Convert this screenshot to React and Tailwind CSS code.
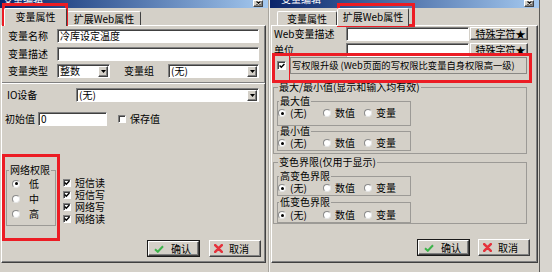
import React from 'react';

const RAISED = 'border border-t-white border-l-white border-r-[#404040] border-b-[#404040] shadow-[inset_-1px_-1px_0_#808080]';
const SUNKEN = 'border border-t-[#808080] border-l-[#808080] border-r-white border-b-white shadow-[inset_1px_1px_0_#404040]';

function TitleBar({ title, pad, closeGap }) {
  return (
    <div className="h-[8px] flex items-start justify-between bg-linear-to-r from-[#0a246a] to-[#a6caf0] overflow-hidden">
      <span className={`${pad} -mt-[6px] text-[10px] leading-[10px] text-white`}>{title}</span>
      <div className={`${closeGap} w-[10px] h-[7px] bg-[#d4d0c8] ${RAISED} flex items-end justify-center pb-[1px]`}>
        <svg width="5" height="4" viewBox="0 0 5 4">
          <path d="M0.5 0.5L4.5 3.5M4.5 0.5L0.5 3.5" stroke="#000" strokeWidth="1.1" />
        </svg>
      </div>
    </div>
  );
}

function Tab({ active, className = '', children }) {
  if (active) {
    return (
      <div className={`relative z-10 h-[18px] -mb-[1px] bg-[#d4d0c8] border-t border-l border-r border-t-white border-l-white border-r-[#404040] rounded-t-[2px] flex items-center justify-center pb-[2px] ${className}`}>
        {children}
      </div>
    );
  }
  return (
    <div className={`h-[14px] border-t border-l border-r border-t-white border-l-white border-r-[#404040] rounded-t-[2px] flex items-center justify-center ${className}`}>
      {children}
    </div>
  );
}

function TextBox({ className = '', children }) {
  return (
    <div className={`h-[14px] bg-white ${SUNKEN} flex items-center pl-[2px] overflow-hidden shrink-0 ${className}`}>
      {children}
    </div>
  );
}

function Combo({ className = '', children }) {
  return (
    <div className={`h-[14px] bg-white ${SUNKEN} flex items-center justify-between pl-[2px] pr-[1px] shrink-0 ${className}`}>
      <span>{children}</span>
      <div className={`w-[10px] h-[11px] bg-[#d4d0c8] ${RAISED} flex items-center justify-center`}>
        <svg width="5" height="3" viewBox="0 0 5 3">
          <path d="M0 0H5L2.5 3Z" fill="#000" />
        </svg>
      </div>
    </div>
  );
}

function Check({ checked, className = '' }) {
  return (
    <div className={`w-[8px] h-[8px] bg-white ${SUNKEN} flex items-center justify-center shrink-0 ${className}`}>
      {checked && (
        <svg width="6" height="6" viewBox="0 0 6 6">
          <path d="M0.6 2.6L2.3 4.3L5.4 1" stroke="#000" strokeWidth="1.4" fill="none" />
        </svg>
      )}
    </div>
  );
}

function Radio({ on }) {
  return (
    <div className="w-[8px] h-[8px] rounded-full bg-white border border-[#8a8a8a] border-r-[#e4e4e4] border-b-[#e4e4e4] flex items-center justify-center shrink-0">
      {on && <div className="w-[3px] h-[3px] rounded-full bg-black" />}
    </div>
  );
}

function Group({ title, className = '', legendClass = 'ml-[1px]', children }) {
  return (
    <fieldset className={`border border-[#9c9a96] ${className}`}>
      <legend className={`text-[10px] leading-[10px] px-[1px] ${legendClass}`}>{title}</legend>
      {children}
    </fieldset>
  );
}

function ChoiceRow({ className = '' }) {
  return (
    <div className={`flex items-center h-[14px] ${className}`}>
      <div className="w-[45px] flex items-center gap-[4px]">
        <Radio on />
        <span>(无)</span>
      </div>
      <div className="w-[41px] flex items-center gap-[4px]">
        <Radio />
        <span>数值</span>
      </div>
      <div className="flex items-center gap-[4px]">
        <Radio />
        <span>变量</span>
      </div>
    </div>
  );
}

function OkBtn() {
  return (
    <div className="w-[53px] h-[17px] border border-[#1a1a1a] shrink-0">
      <div className={`h-full ${RAISED} flex items-center pl-[5px] gap-[7px]`}>
        <svg width="10" height="8" viewBox="0 0 10 8">
          <path d="M1 4.3L3.8 6.8L9 1.3" stroke="#3cb44a" strokeWidth="2" fill="none" />
        </svg>
        <span>确认</span>
      </div>
    </div>
  );
}

function CancelBtn() {
  return (
    <div className={`w-[52px] h-[17px] ${RAISED} flex items-center pl-[4px] gap-[6px] shrink-0`}>
      <svg width="9" height="9" viewBox="0 0 9 9">
        <path d="M1.2 1.2L7.8 7.8M7.8 1.2L1.2 7.8" stroke="#e5323c" strokeWidth="2.6" strokeLinecap="round" />
      </svg>
      <span>取消</span>
    </div>
  );
}

function SpecialBtn() {
  return (
    <div className={`w-[58px] h-[13px] ml-[1px] ${RAISED} flex items-center justify-center pl-[3px] shrink-0 whitespace-nowrap`}>
      特殊字符★
    </div>
  );
}

const PANEL = 'border border-t-white border-l-white border-r-[#404040] border-b-[#404040] shadow-[inset_-1px_-1px_0_#808080] flex flex-col';

function LeftDialog() {
  return (
    <div className="w-[268px] h-[272px] flex flex-col shrink-0">
      <TitleBar title="变量编辑" pad="pl-[3px]" closeGap="mr-[5px]" />
      <div className="h-[17px] flex items-end pl-[4px]">
        <Tab active className="w-[63px]">变量属性</Tab>
        <Tab className="w-[74px]">扩展Web属性</Tab>
      </div>
      <div className={`h-[238px] w-[265px] ml-[1px] ${PANEL}`}>
        <div className="flex items-center h-[14px] mt-[3px]">
          <span className="w-[55px] pl-[6px]">变量名称</span>
          <TextBox className="w-[202px]">冷库设定温度</TextBox>
        </div>
        <div className="flex items-center h-[14px] mt-[4px]">
          <span className="w-[55px] pl-[6px]">变量描述</span>
          <TextBox className="w-[202px]" />
        </div>
        <div className="flex items-center h-[14px] mt-[3px]">
          <span className="w-[55px] pl-[6px]">变量类型</span>
          <Combo className="w-[53px]">整数</Combo>
          <span className="w-[58px] pl-[14px]">变量组</span>
          <Combo className="w-[91px]">(无)</Combo>
        </div>
        <div className="h-[2px] mt-[4px] border-t border-t-[#808080] border-b border-b-white" />
        <div className="flex items-center h-[14px] mt-[4px]">
          <span className="w-[74px] pl-[5px]">IO设备</span>
          <Combo className="w-[183px]">(无)</Combo>
        </div>
        <div className="flex items-center h-[14px] mt-[10px]">
          <span className="w-[36px] pl-[3px]">初始值</span>
          <TextBox className="w-[69px]">0</TextBox>
          <Check className="ml-[11px]" />
          <span className="ml-[4px]">保存值</span>
        </div>
        <div className="flex items-start mt-[39px]">
          <Group title="网络权限" className="ml-[4px] w-[50px] pb-[4px]" legendClass="ml-[2px]">
            {['低', '中', '高'].map((t, i) => (
              <div key={t} className={`h-[15px] flex items-center pl-[5px] ${i === 0 ? 'mt-[1px]' : ''}`}>
                <Radio on={i === 0} />
                <span className="ml-[9px]">{t}</span>
              </div>
            ))}
          </Group>
          <div className="ml-[7px] mt-[12px] flex flex-col">
            {['短信读', '短信写', '网络写', '网络读'].map((t) => (
              <div key={t} className="h-[12px] flex items-center gap-[4px]">
                <Check checked />
                <span className="leading-[10px]">{t}</span>
              </div>
            ))}
          </div>
        </div>
        <div className="flex justify-end gap-[9px] pr-[4px] mt-[14px]">
          <OkBtn />
          <CancelBtn />
        </div>
      </div>
    </div>
  );
}

function RightDialog() {
  return (
    <div className="w-[270px] h-[272px] flex flex-col shrink-0 border-l border-l-[#f4f3f0]">
      <TitleBar title="变量编辑" pad="pl-[11px]" closeGap="mr-[5px]" />
      <div className="h-[17px] flex items-end pl-[7px]">
        <Tab className="w-[60px]">变量属性</Tab>
        <Tab active className="w-[72px]">扩展Web属性</Tab>
      </div>
      <div className={`h-[238px] w-[267px] ml-[1px] ${PANEL}`}>
        <div className="flex items-center h-[13px] mt-[1px]">
          <span className="w-[74px] pl-[2px]">Web变量描述</span>
          <TextBox className="w-[123px] h-[13px]" />
          <SpecialBtn />
        </div>
        <div className="flex items-center h-[13px] mt-[3px]">
          <span className="w-[74px] pl-[2px]">单位</span>
          <TextBox className="w-[123px] h-[13px]" />
          <SpecialBtn />
        </div>
        <div className="flex items-center h-[17px] mt-[1px] pl-[5px]">
          <Check checked className="w-[9px] h-[9px]" />
          <div className="ml-[4px] w-[237px] h-[17px] border border-[#8a8884] flex items-center pl-[1px] whitespace-nowrap overflow-hidden text-[9.3px]">
            写权限升级 (Web页面的写权限比变量自身权限高一级)
          </div>
        </div>
        <Group title="最大/最小值(显示和输入均有效)" className="mt-[8px] ml-[1px] w-[254px] pb-[2px]" legendClass="ml-[4px]">
          <Group title="最大值" className="mt-[4px] ml-[3px] w-[134px] pb-[5px]">
            <ChoiceRow />
          </Group>
          <Group title="最小值" className="ml-[3px] w-[134px]">
            <ChoiceRow />
          </Group>
        </Group>
        <Group title="变色界限(仅用于显示)" className="mt-[3px] ml-[1px] w-[254px]" legendClass="ml-[4px]">
          <Group title="高变色界限" className="mt-[4px] ml-[3px] w-[134px]">
            <ChoiceRow />
          </Group>
          <Group title="低变色界限" className="mt-[1px] ml-[3px] w-[134px]">
            <ChoiceRow className="mt-[1px]" />
          </Group>
        </Group>
        <div className="flex justify-end gap-[8px] pr-[7px] mt-[15px]">
          <OkBtn />
          <CancelBtn />
        </div>
      </div>
    </div>
  );
}

export default function App() {
  return (
    <div className="relative w-[552px] h-[272px] flex bg-[#d4d0c8] overflow-hidden text-[10px] leading-none text-black font-['Noto_Sans_CJK_SC',sans-serif]">
      <LeftDialog />
      <div className="w-[1px] shrink-0 bg-[#a8a59e]" />
      <RightDialog />
      <div className="flex-1 bg-[#d8d5cf] border-l border-l-[#5c5b58]" />

      {/* red annotation boxes */}
      <div className="absolute left-[2px] top-[3px] w-[66px] h-[23px] border-[3px] border-[#ec1c24]" />
      <div className="absolute left-[2px] top-[154px] w-[58px] h-[87px] border-[3px] border-[#ec1c24]" />
      <div className="absolute left-[337px] top-[3px] w-[78px] h-[24px] border-[3px] border-[#ec1c24]" />
      <div className="absolute left-[272px] top-[53px] w-[260px] h-[30px] border-[3px] border-[#ec1c24]" />
      <div className="absolute left-[289px] top-[55px] w-[1px] h-[26px] bg-[#ec1c24]" />
    </div>
  );
}
